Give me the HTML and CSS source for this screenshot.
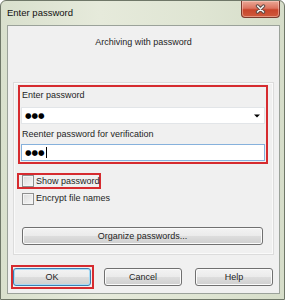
FILE: index.html
```html
<!DOCTYPE html>
<html lang="en">
<head>
  <meta charset="UTF-8" />
  <title>Enter password</title>
  <link rel="stylesheet" href="styles.css">
</head>
<body>
  <div class="window">
    <div class="titlebar">
      <span class="title">Enter password</span>
      <span class="close">
        <svg width="13" height="10" viewBox="0 0 13 10">
          <path d="M3.5 2 L9.5 8 M9.5 2 L3.5 8" stroke="#5a4640" stroke-width="3.4" stroke-linecap="round"/>
          <path d="M3.5 2 L9.5 8 M9.5 2 L3.5 8" stroke="#f4f4f4" stroke-width="1.6" stroke-linecap="round"/>
        </svg>
      </span>
    </div>

    <div class="client">
      <div class="caption">Archiving with password</div>

      <div class="panel">
        <div class="pw-group marked">
          <div class="label">Enter password</div>
          <div class="field combo">
            <span class="dots">●●●</span>
            <svg class="arrow" width="6" height="4" viewBox="0 0 6 4"><path d="M0 0.5 H6 L3 3.5 Z" fill="#000"/></svg>
          </div>
          <div class="label">Reenter password for verification</div>
          <div class="field edit">
            <span class="dots">●●●</span><span class="caret"></span>
          </div>
        </div>

        <div class="check show marked"><span class="box"></span>Show password</div>
        <div class="check encrypt"><span class="box"></span>Encrypt file names</div>

        <div class="btn organize">Organize passwords...</div>
      </div>

      <div class="buttons">
        <div class="btn ok">OK</div>
        <div class="btn">Cancel</div>
        <div class="btn">Help</div>
      </div>
    </div>
  </div>
</body>
</html>
```

FILE: styles.css
```css
* {
  box-sizing: border-box;
}
body {
  margin: 0;
  font-family: 'Liberation Sans', Arial, sans-serif;
  font-size: 9px;
  color: #1e1e1e;
  background: #fff;
}
.window {
  width: 285px;
  height: 300px;
  border: 1px solid #6f7768;
  border-radius: 6px 6px 0 0;
  background: linear-gradient(90deg, #d9e0cd 0%, #e6eadb 35%, #dfe5d3 70%, #d6ddc9 100%);
}
.titlebar {
  height: 24px;
  display: flex;
  justify-content: space-between;
  align-items: flex-start;
  padding: 0 4px 0 6px;
}
.title {
  font-size: 9.5px;
  line-height: 12px;
  padding-top: 6px;
  color: #111;
}
.close {
  width: 39px;
  height: 17px;
  border: 1px solid #7b3a2c;
  border-top: none;
  border-radius: 0 0 4px 4px;
  background: linear-gradient(#eaa896 0%, #dc7460 45%, #c8452b 55%, #cf5a3c 100%);
  display: flex;
  align-items: center;
  justify-content: center;
  box-shadow: inset 0 0 0 1px rgba(255, 220, 210, 0.45);
}
.close svg {
  display: block;
}
.client {
  margin-left: 6px;
  width: 273px;
  height: 269px;
  border: 1px solid #9ba29a;
  background: #f0f0f0;
}
.caption {
  text-align: center;
  line-height: 11px;
  padding-top: 11px;
  height: 22px;
}
.panel {
  margin: 34px 0 0 5px;
  width: 261px;
  height: 173px;
  border: 1px solid #dcdcdc;
  background: #f0f0f0;
  box-shadow: inset 0 0 0 1px #fafafa;
}
.marked {
  border: 2px solid #d62b2f;
}
.pw-group {
  margin: 2px 0 0 4px;
  width: 250px;
  height: 79px;
  padding: 3px 0 0 0;
}
.label {
  line-height: 11px;
  padding-left: 2px;
}
.field {
  margin: 6px 0 5px 1px;
  width: 244px;
  height: 17px;
  background: #fff;
  display: flex;
  align-items: center;
  padding-left: 3px;
}
.combo {
  border: 1px solid #e2e5e8;
}
.edit {
  margin-top: 4px;
  border: 1px solid #86b1dc;
}
.dots {
  font-family: 'DejaVu Sans', sans-serif;
  font-size: 7.5px;
  line-height: 10px;
  color: #000;
}
.caret {
  width: 1px;
  height: 11px;
  background: #000;
  margin-left: 1px;
}
.arrow {
  margin-left: auto;
  margin-right: 4px;
}
.check {
  display: flex;
  align-items: center;
  gap: 2px;
  line-height: 11px;
  white-space: nowrap;
}
.box {
  flex: none;
  width: 12px;
  height: 12px;
  border: 1px solid #8e8f8f;
  background: linear-gradient(135deg, #dcdcdc, #f7f7f7);
  box-shadow: inset 0 0 0 1px #f4f4f4;
}
.show {
  margin: 9px 0 0 3px;
  width: 84px;
  height: 16px;
  padding-left: 3px;
}
.encrypt {
  margin: 3px 0 0 8px;
  height: 13px;
}
.btn {
  height: 18px;
  border: 1px solid #707070;
  border-radius: 3px;
  background: linear-gradient(#f3f3f3 0%, #ebebeb 48%, #dddddd 52%, #cfcfcf 100%);
  box-shadow: inset 0 0 0 1px #fbfbfb;
  display: flex;
  align-items: center;
  justify-content: center;
  line-height: 11px;
}
.organize {
  margin: 22px 0 0 8px;
  width: 241px;
}
.buttons {
  display: flex;
  gap: 13px;
  margin: 13px 0 0 5px;
}
.buttons .btn {
  width: 78px;
}
.ok {
  position: relative;
  border-color: #3c7fb1;
  box-shadow: inset 0 0 0 1px #a9dcf6;
}
.ok::after {
  content: "";
  position: absolute;
  inset: -4px -4px -4px -3px;
  border: 2px solid #d62b2f;
}
```
